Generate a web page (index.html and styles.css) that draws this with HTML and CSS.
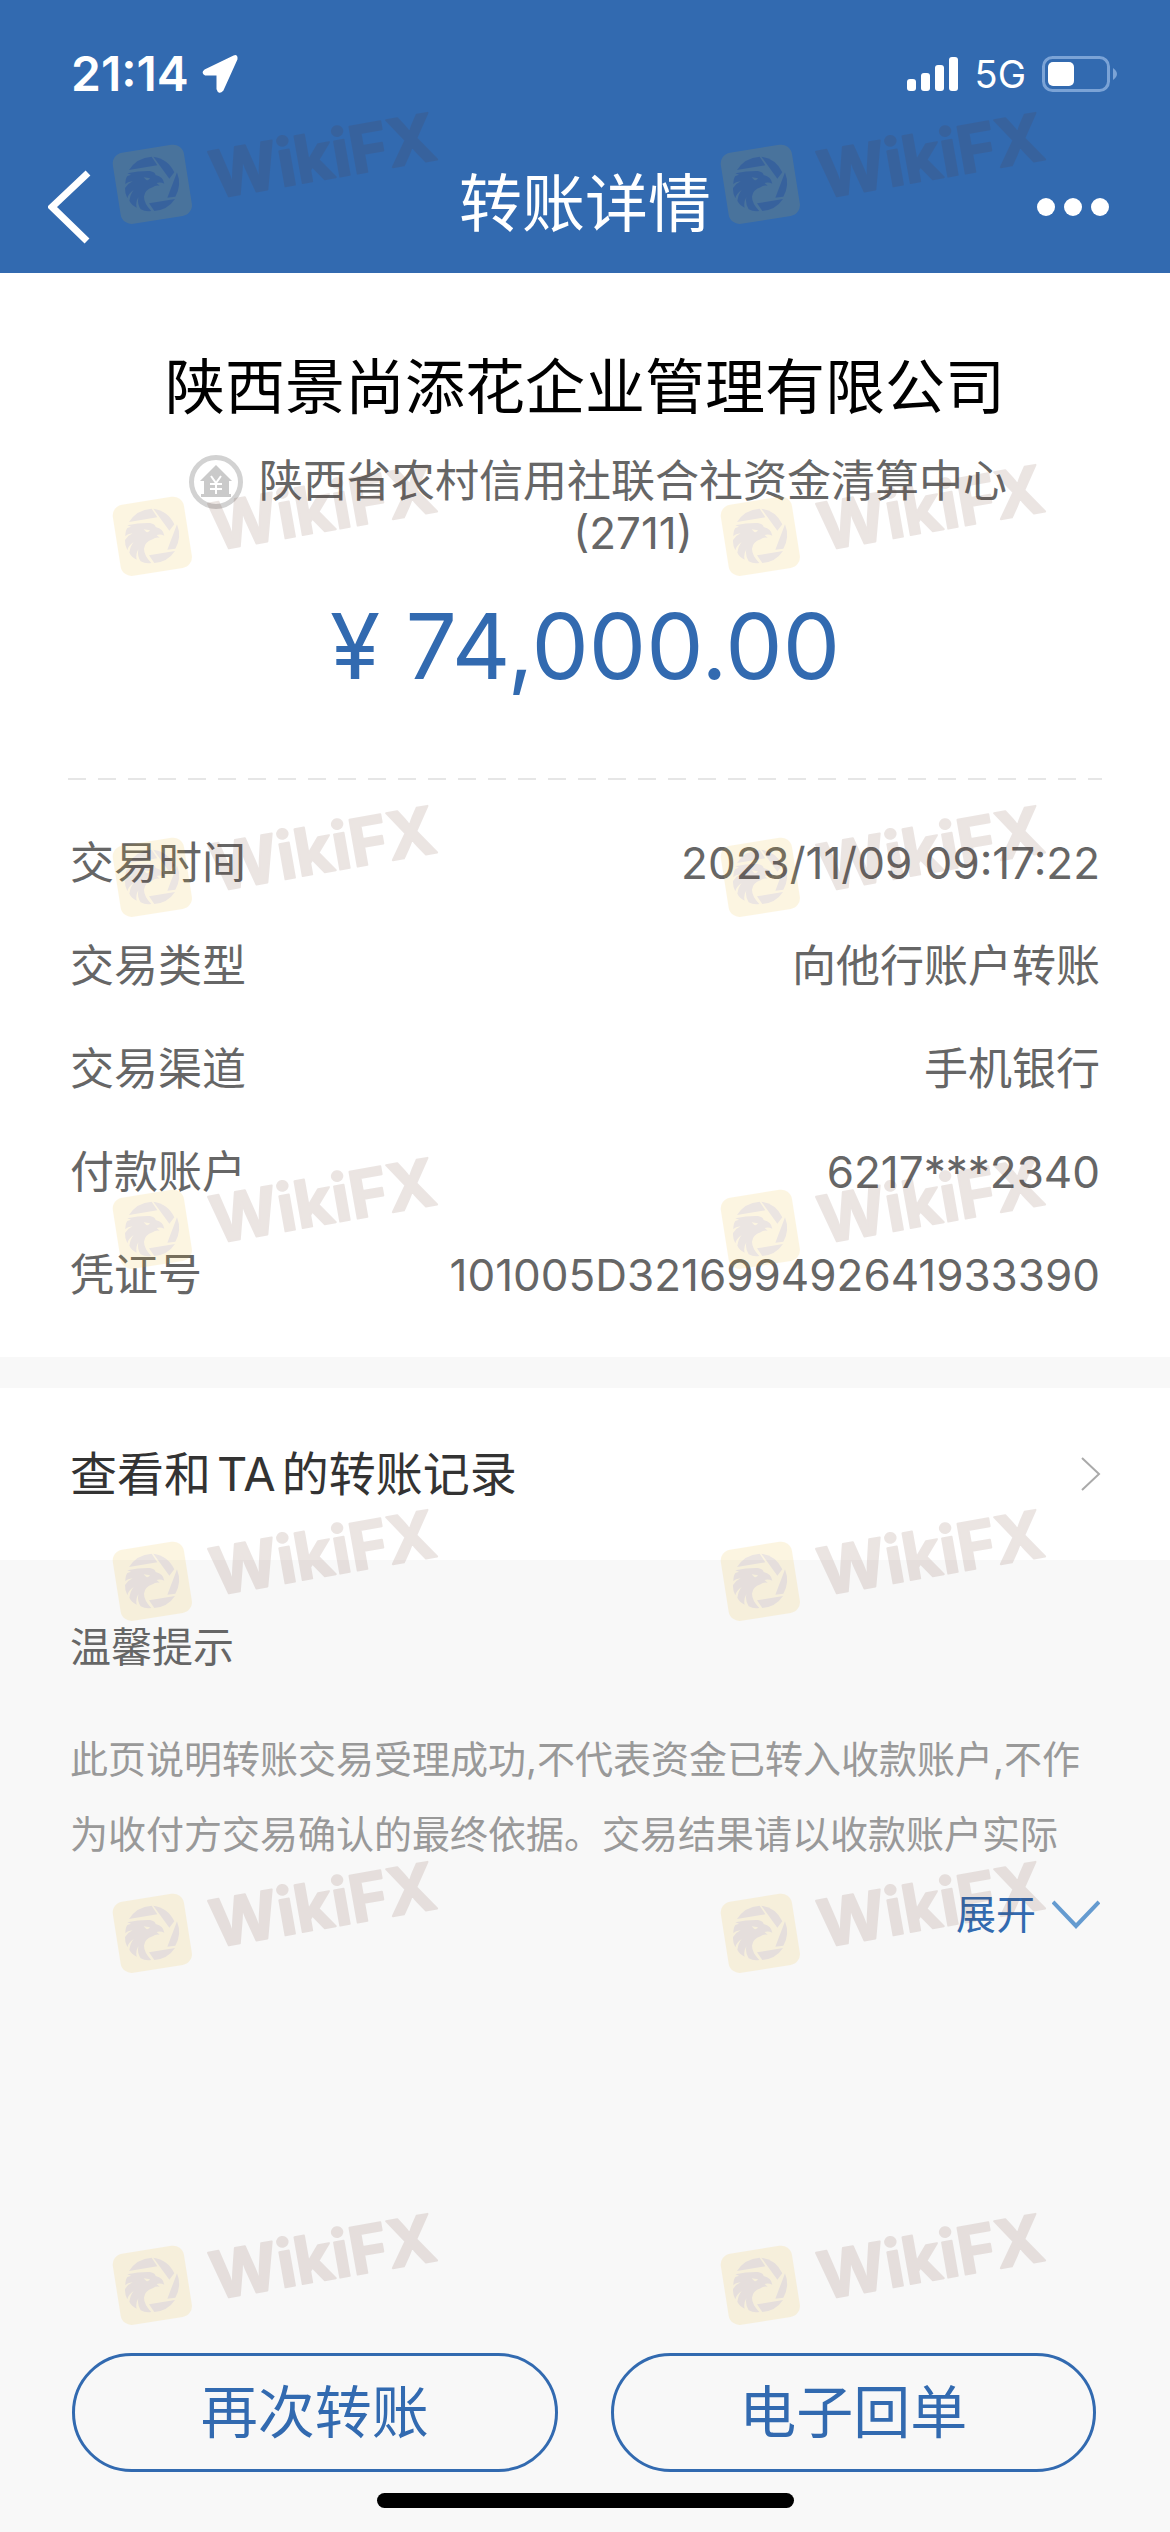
FILE: index.html
```html
<!DOCTYPE html>
<html lang="zh-CN">
<head>
<meta charset="utf-8">
<meta name="viewport" content="width=device-width, initial-scale=1">
<title>转账详情</title>
<link rel="stylesheet" href="styles.css">
</head>
<body>
<div class="page">
  <header class="header">
    <div class="status">
      <div class="status-side">
        <span class="clock">21:14</span>
        <svg class="locate" width="38" height="42" viewBox="0 0 38 42" aria-hidden="true"><path d="M33 3.500 L4 17.500 Q1 20 4.500 21.500 H16.500 V36 Q18 41 21.500 37 L35.500 6 Q36 2 33 3.500Z" fill="#fff" stroke="#fff" stroke-width="2" stroke-linejoin="round"/></svg>
      </div>
      <div class="status-side">
        <svg width="52" height="36" viewBox="0 0 52 36" aria-hidden="true" fill="#fff"><rect x="0" y="23" width="9" height="12" rx="3"/><rect x="14" y="17" width="9" height="18" rx="3"/><rect x="28" y="9" width="9" height="26" rx="3"/><rect x="42" y="1" width="9" height="34" rx="3"/></svg>
        <span class="network">5G</span>
        <svg width="76" height="36" viewBox="0 0 76 36" aria-hidden="true"><rect x="1.500" y="1.500" width="65" height="33" rx="9" fill="none" stroke="#7ba3d6" stroke-width="3"/><rect x="6" y="6" width="26" height="24" rx="5" fill="#fff"/><path d="M71 12Q79 18 71 24Z" fill="#7ba3d6"/></svg>
      </div>
    </div>
    <nav class="navbar">
      <button class="icon-button" type="button" aria-label="返回"><svg width="44" height="76" viewBox="0 0 44 76" aria-hidden="true"><path d="M40 4 4 38 39 72" fill="none" stroke="#fff" stroke-width="7"/></svg></button>
      <h1 class="title">转账详情</h1>
      <button class="icon-button icon-button-end" type="button" aria-label="更多"><svg width="74" height="20" viewBox="0 0 74 20" aria-hidden="true" fill="#fff"><circle cx="10" cy="10" r="9"/><circle cx="37" cy="10" r="9"/><circle cx="64" cy="10" r="9"/></svg></button>
    </nav>
  </header>

  <main class="main">
    <section class="card">
      <h2 class="payee">陕西景尚添花企业管理有限公司</h2>
      <div class="bank">
        <svg class="bank-icon" width="54" height="54" viewBox="0 0 54 54" aria-hidden="true"><circle cx="27" cy="27" r="24.500" fill="#fff" stroke="#d2d2d2" stroke-width="5"/><path d="M27 10 43 26H40V39H42V42H12V39H15V26H11Z" fill="#cacaca"/><path d="M22 21 27 28 32 21M27 28V39M21 29H33M21 34H33" fill="none" stroke="#fff" stroke-width="2"/></svg>
        <p class="bank-name">陕西省农村信用社联合社资金清算中心<br>(2711)</p>
      </div>
      <p class="amount">¥ 74,000.00</p>
      <div class="divider"></div>
      <dl class="details">
        <div class="row"><dt>交易时间</dt><dd>2023/11/09 09:17:22</dd></div>
        <div class="row"><dt>交易类型</dt><dd>向他行账户转账</dd></div>
        <div class="row"><dt>交易渠道</dt><dd>手机银行</dd></div>
        <div class="row"><dt>付款账户</dt><dd>6217***2340</dd></div>
        <div class="row"><dt>凭证号</dt><dd>101005D321699492641933390</dd></div>
      </dl>
    </section>

    <a class="records" href="#records">
      <span>查看和<span class="latin">TA</span>的转账记录</span>
      <svg width="22" height="38" viewBox="0 0 22 38" aria-hidden="true"><path d="M2 3 19 19 2 35" fill="none" stroke="#aaa" stroke-width="2"/></svg>
    </a>

    <section class="tips">
      <h2 class="tips-title">温馨提示</h2>
      <p class="tips-text">此页说明转账交易受理成功,不代表资金已转入收款账户,不作<br>为收付方交易确认的最终依据。交易结果请以收款账户实际</p>
      <button class="expand" type="button">展开<svg width="48" height="30" viewBox="0 0 48 30" aria-hidden="true"><path d="M1 2 24 26 47 2" fill="none" stroke="#659bd0" stroke-width="4"/></svg></button>
    </section>
  </main>

  <footer class="footer">
    <div class="actions">
      <button class="action" type="button">再次转账</button>
      <button class="action" type="button">电子回单</button>
    </div>
    <div class="home-indicator"></div>
  </footer>

  <div class="watermarks" aria-hidden="true">
    <svg class="defs" width="0" height="0">
      <symbol id="mark" viewBox="0 -120 1200 540">
        <rect x="49" y="145" width="216" height="216" rx="33" transform="rotate(-9 157 253)" fill="#eeb416"/>
        <g fill="#612f1e">
          <path d="M87 210Q110 173 155 170L172 196Z"/>
          <path d="M160 170Q204 176 223 217L208 236Z"/>
          <path d="M231 217Q246 255 226 290L202 293Z"/>
          <path d="M225 297Q203 330 163 333L147 310Z"/>
          <path d="M82 220Q118 212 150 213Q166 216 167 225Q190 230 193 251Q180 245 170 249L179 257Q166 255 158 262Q134 270 132 290Q132 310 154 333Q136 336 122 328Q111 312 115 292Q106 308 110 323Q94 315 88 302Q91 282 101 270Q84 282 82 295Q74 280 75 264Q84 250 98 244Q82 246 76 253Q76 235 82 228L93 224Z"/>
        </g>
        <path d="M131 232 150 235Q147 242 139 240Z" fill="#eeb416"/>
        <text class="mark-text" x="344" y="296" transform="rotate(-10 344 296)">WikiFX</text>
      </symbol>
    </svg>
    <svg class="mark"><use href="#mark"/></svg><svg class="mark"><use href="#mark"/></svg>
    <svg class="mark"><use href="#mark"/></svg><svg class="mark"><use href="#mark"/></svg>
    <svg class="mark"><use href="#mark"/></svg><svg class="mark"><use href="#mark"/></svg>
    <svg class="mark"><use href="#mark"/></svg><svg class="mark"><use href="#mark"/></svg>
    <svg class="mark"><use href="#mark"/></svg><svg class="mark"><use href="#mark"/></svg>
    <svg class="mark"><use href="#mark"/></svg><svg class="mark"><use href="#mark"/></svg>
    <svg class="mark"><use href="#mark"/></svg><svg class="mark"><use href="#mark"/></svg>
  </div>
</div>
</body>
</html>
```
FILE: styles.css
```css
* {
  box-sizing: border-box;
  margin: 0;
  padding: 0;
}

body {
  background: #f8f8f8;
  color: #666;
  font-family: Inter, "Noto Sans CJK SC", sans-serif;
}

button {
  border: 0;
  background: none;
  font-family: inherit;
}

svg {
  display: block;
  flex: none;
}

.page {
  position: relative;
  display: flex;
  flex-direction: column;
  min-height: 100vh;
}

/* Header */
.header {
  background: #326ab0;
  color: #fff;
}

.status {
  display: flex;
  align-items: center;
  justify-content: space-between;
  height: 148px;
  padding: 0 52px 0 71px;
}

.status-side {
  display: flex;
  align-items: center;
  gap: 16px;
}

.clock {
  font-size: 48px;
  font-weight: 600;
  line-height: 52px;
}

.locate {
  margin-left: -4px;
}

.network {
  font-size: 38px;
  line-height: 44px;
}

.navbar {
  display: grid;
  grid-template-columns: 1fr auto 1fr;
  align-items: center;
  height: 125px;
  padding: 0 48px 8px;
}

.icon-button {
  justify-self: start;
}

.icon-button-end {
  justify-self: end;
  margin-right: 12px;
}

.title {
  padding-bottom: 8px;
  font-size: 63px;
  font-weight: 400;
  line-height: 88px;
}

/* Transfer summary */
.card {
  padding: 72px 70px 30px;
  background: #fff;
}

.payee {
  color: #000;
  font-size: 60px;
  font-weight: 400;
  line-height: 84px;
  text-align: center;
}

.bank {
  display: flex;
  justify-content: center;
  gap: 16px;
  margin-top: 26px;
  padding-left: 26px;
}

.bank-name {
  font-size: 44px;
  line-height: 52px;
  text-align: center;
}

.amount {
  margin-top: 31px;
  color: #326ab0;
  font-size: 91px;
  line-height: 112px;
  text-align: center;
}

.divider {
  height: 2px;
  margin: 76px -2px 32px;
  background: repeating-linear-gradient(90deg, #e6e6e6 0 18px, transparent 18px 30px);
}

.row {
  display: flex;
  justify-content: space-between;
  font-size: 44px;
  line-height: 103px;
}

/* Transfer history link */
.records {
  display: flex;
  align-items: center;
  justify-content: space-between;
  margin-top: 31px;
  padding: 0 68px 0 70px;
  background: #fff;
  color: #333;
  font-size: 47px;
  line-height: 172px;
  text-decoration: none;
}

.latin {
  padding: 0 6px;
}

/* Tips */
.tips {
  display: flex;
  flex-direction: column;
  padding: 57px 70px 0;
}

.tips-title {
  font-size: 41px;
  font-weight: 400;
  line-height: 60px;
}

.tips-text {
  margin-top: 45px;
  color: #999;
  font-size: 38px;
  line-height: 75px;
}

.expand {
  display: flex;
  align-items: center;
  align-self: flex-end;
  gap: 16px;
  margin-top: 13px;
  color: #326ab0;
  font-size: 40px;
  line-height: 60px;
}

/* Bottom actions */
.footer {
  margin-top: auto;
  padding: 60px 0 24px;
}

.actions {
  display: grid;
  grid-template-columns: 1fr 1fr;
  gap: 53px;
  padding: 0 74px 0 72px;
}

.action {
  height: 119px;
  border: 3px solid #326ab0;
  border-radius: 60px;
  color: #326ab0;
  font-size: 57px;
  line-height: 80px;
}

.home-indicator {
  width: 417px;
  height: 15px;
  margin: 21px auto 0;
  border-radius: 8px;
  background: #000;
}

/* Watermark layer over the whole page */
.watermarks {
  position: absolute;
  inset: 0;
  display: grid;
  grid-template-columns: 608px 400px;
  grid-template-rows: 352px 341px repeat(4, 352px) 180px;
  padding: 60px 0 0 100px;
  overflow: hidden;
  pointer-events: none;
}

.defs {
  position: absolute;
}

.mark {
  width: 400px;
  height: 180px;
  opacity: 0.12;
}

.mark-text {
  fill: #612f1e;
  stroke: #612f1e;
  stroke-width: 6px;
  stroke-linejoin: round;
  font-family: Inter, sans-serif;
  font-size: 196px;
  font-weight: 700;
}
```
